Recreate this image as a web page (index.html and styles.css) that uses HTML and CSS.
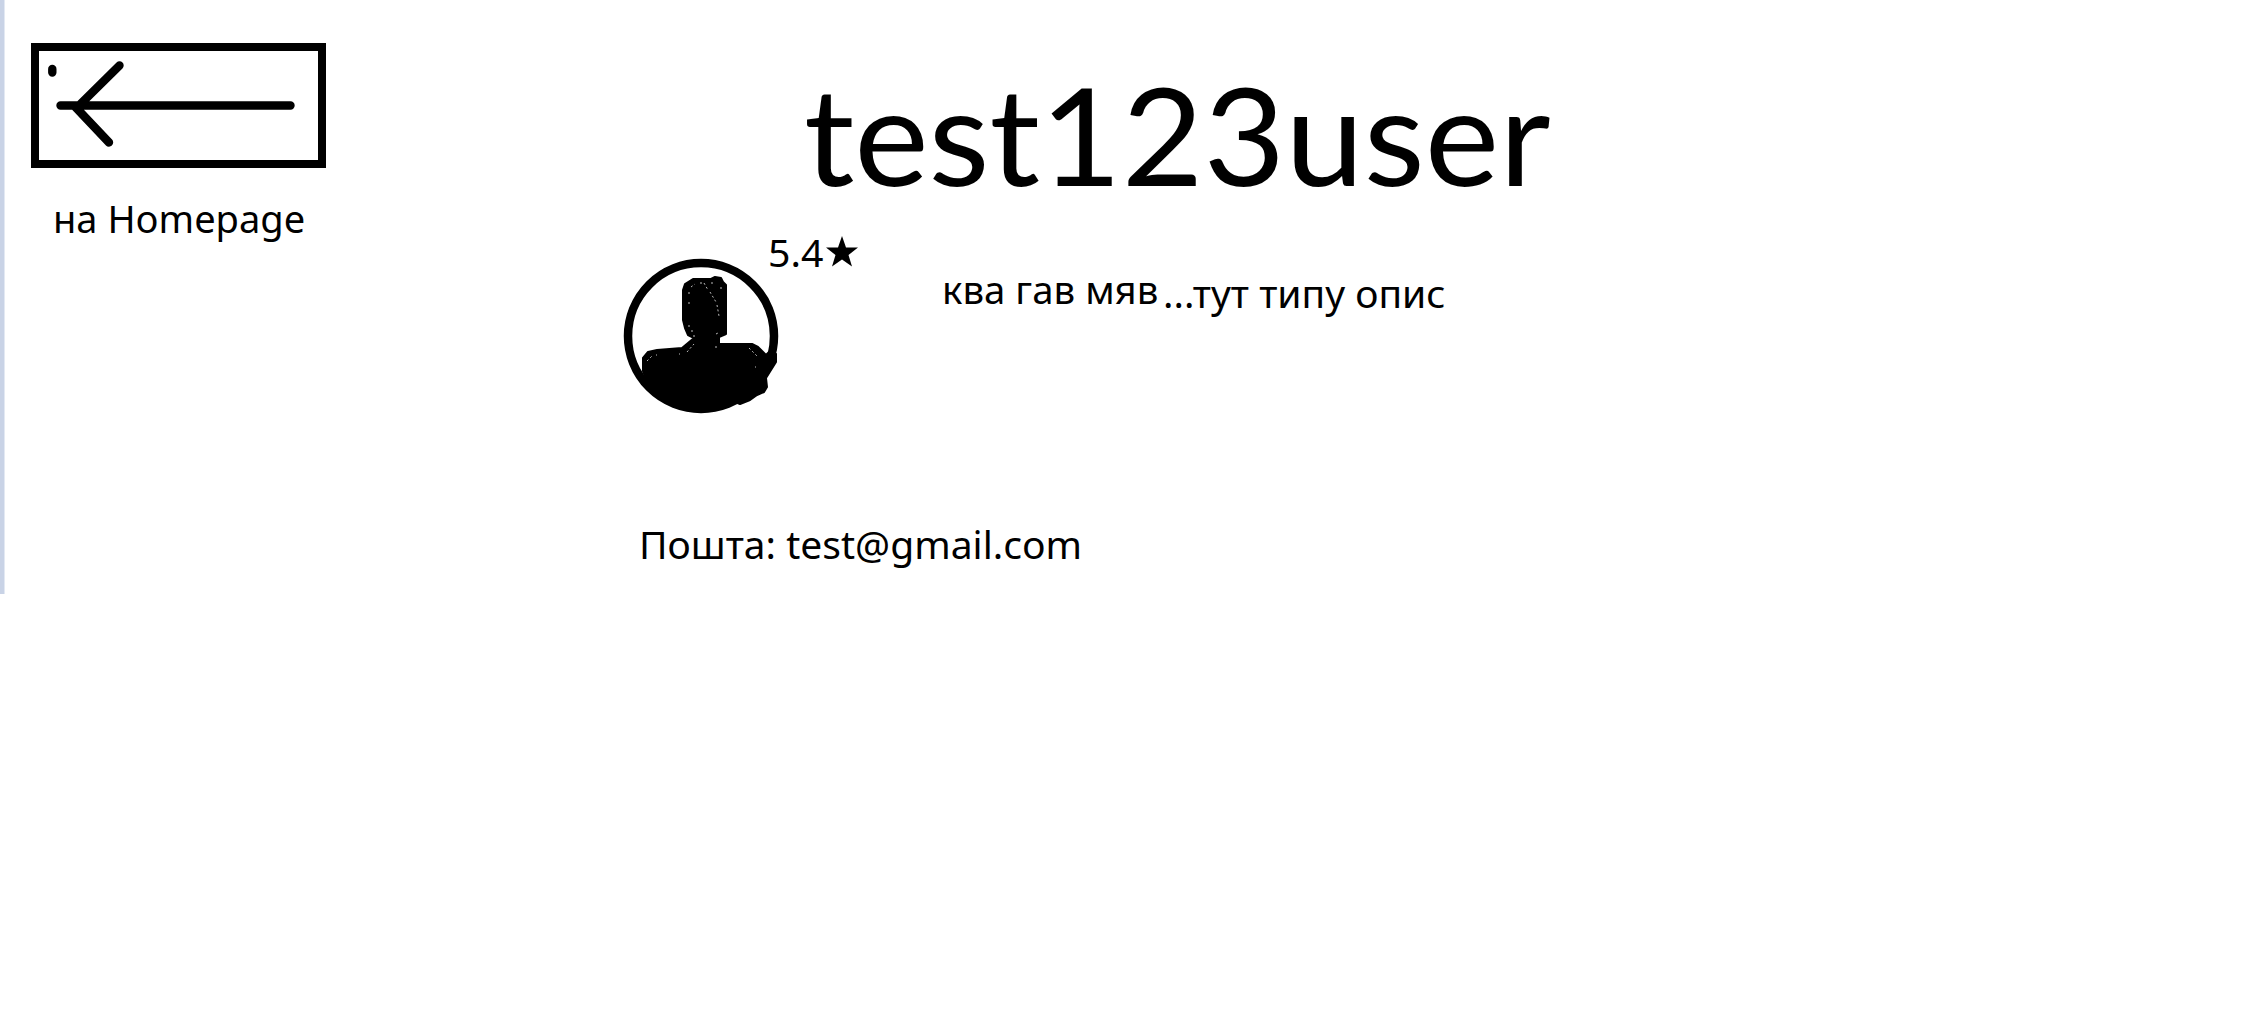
FILE: index.html
```html
<!DOCTYPE html>
<html lang="uk">
<head>
<meta charset="utf-8">
<title>test123user</title>
<link rel="stylesheet" href="styles.css">
</head>
<body>
<div class="page">
  <div class="edge"></div>
  <nav class="back">
    <a class="back-button" aria-label="Homepage">
      <svg width="279" height="109" viewBox="39 51 279 109" fill="none" stroke="#000" stroke-width="8.4" stroke-linecap="round" stroke-linejoin="round">
        <path d="M52.3 69v3.6M60.5 105.5H290.5M119.500 65.500L79 105.500M74 105.500L109 142.500"/>
      </svg>
    </a>
    <span class="text back-label">на Homepage</span>
  </nav>
  <main class="profile">
    <h1 class="title">test123user</h1>
    <section class="info">
      <svg class="avatar" width="156" height="156" viewBox="0 0 156 156">
        <circle cx="77" cy="77" r="73" fill="none" stroke="#000" stroke-width="8.500"/>
        <path d="M19 112V99L24 93L33 91L58 89L70 79L64 76L61 69L59 61V31L61 25L69 20H87L91 18L97 19L99 23L102 26V75L95 78V85H128L134 88L142 96L146 92L152 95V103L142 119L143 128L140 133L133 136L126 141L116 145L111 143L88 151H64L39 141L24 124Z" stroke="#000" stroke-width="2" stroke-linejoin="round"/>
        <path d="M80 24L84 31M86 33L92 43M93 46L95 57M65 33v2M65 43v2M65 66v2M67 28l4-3M76 24h3M67 72h2M70 76v2M63 93l7-8M23 102l5-5M32 96h1M55 95h1M92 87v2M92 75l4-2M97 28v3M87 24h2M125 89l8 8M131 108h1" fill="none" stroke="#bbb" stroke-width="1" stroke-dasharray="2 2.500"/>
      </svg>
      <div class="rating"><span class="text score">5.4</span><svg class="star" width="32" height="31" viewBox="0 0 32 31"><path d="M16 0L20 11.500H32L22.500 19L26 30.500L16 23.500L6 30.500L9.500 19L0 11.500H12Z"/></svg></div>
      <p class="about"><span class="text about-lead">ква гав мяв</span><span class="text about-rest">...тут типу опис</span></p>
    </section>
    <p class="text mail">Пошта: test@gmail.com</p>
  </main>
</div>
</body>
</html>
```
FILE: styles.css
```css
* { box-sizing: border-box; }
body { margin: 0; background: #fff; color: #000; }
h1, p { margin: 0; }
.page { display: flex; align-items: flex-start; width: 2260px; height: 1036px; overflow: hidden; }
.edge { width: 5px; height: 594px; flex: none; background: #c9d3e6; border-right: 1px solid #e3e9f3; }
.text {
  display: block;
  font: 400 38.5px/40px "Noto Sans", sans-serif;
  white-space: nowrap;
  transform-origin: 0 0;
}
.back { width: 295px; margin: 43px 0 0 26px; flex: none; }
.back-button { display: block; height: 125px; border: 8px solid #000; }
.back-button svg { display: block; }
.back-label { margin: 30px 0 0 22px; transform: scaleX(.988); }
.profile { width: 960px; margin-left: 298px; padding-top: 64px; }
.title {
  margin-left: 180px;
  font: 400 136px/140px "Lato", sans-serif;
  white-space: nowrap;
  transform-origin: 0 0;
  transform: scaleX(1.036);
}
.info { display: grid; grid-template-columns: 144px 174px 1fr; align-items: start; height: 211px; }
.avatar { margin-top: 55px; overflow: visible; }
.rating { display: flex; padding-top: 28px; }
.score { width: 58px; transform: scaleX(1.02); }
.star { margin-top: 4px; }
.about { display: flex; padding-top: 65px; }
.about-lead { width: 221px; transform: scaleX(.997); }
.about-rest { margin-top: 4px; transform: scaleX(1.014); }
.mail { margin: 109px 0 0 15px; transform: scaleX(1.014); }
```
